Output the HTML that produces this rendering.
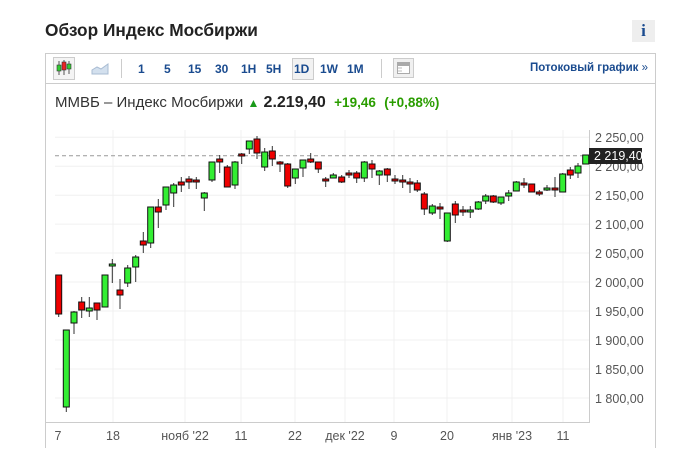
<!DOCTYPE html>
<html><head><meta charset="utf-8">
<style>
html,body{margin:0;width:675px;height:449px;overflow:hidden}
body{background:#fff;font-family:"Liberation Sans",Arial,sans-serif;position:relative}
.a{position:absolute}
.t{left:45px;top:20px;font-size:17.3px;font-weight:bold;color:#222}
.i{left:632px;top:20px;width:23px;height:22px;background:#eee;color:#1a4b8f;font-weight:bold;font-family:"Liberation Serif",serif;font-size:17px;text-align:center;line-height:22px}
.box{left:45px;top:53px;width:609px;height:394px;border:1px solid #ccc;border-bottom:none}
.tb{left:46px;top:54px;width:609px;height:29px;border-bottom:1px solid #ccc}
.n{top:62px;font-size:12px;font-weight:bold;color:#1a4b8f}
.lnk{left:530px;top:62px;font-size:11.5px;font-weight:bold;color:#1a4b8f}
.info{left:55px;top:94px;font-size:15px;color:#333;white-space:nowrap}
</style></head><body>
<div class="a t">Обзор Индекс Мосбиржи</div>
<div class="a i">i</div>
<div class="a box"></div>
<div class="a tb"></div>
<div class="a" style="left:53px;top:57px;width:20px;height:21px;border:1px solid #ccc;background:#f4f4f4"></div>
<svg class="a" style="left:53px;top:57px" width="22" height="22"><line x1="6" y1="4" x2="6" y2="18" stroke="#555"/><rect x="4" y="8" width="4" height="6" fill="#3c3" stroke="#333" stroke-width=".6"/><line x1="11" y1="3" x2="11" y2="18" stroke="#555"/><rect x="9" y="5" width="4" height="8" fill="#e22" stroke="#333" stroke-width=".6"/><line x1="16" y1="4" x2="16" y2="17" stroke="#555"/><rect x="14" y="7" width="4" height="5" fill="#3c3" stroke="#333" stroke-width=".6"/></svg>
<svg class="a" style="left:90px;top:60px" width="20" height="16"><path d="M2 14 L2 10 L7 7 L11 9 L18 4 L18 14Z" fill="#d3e0ee" stroke="#a9bcd3"/></svg>
<div class="a" style="left:121px;top:59px;width:1px;height:19px;background:#ccc"></div>
<div class="a n" style="left:138px">1</div>
<div class="a n" style="left:164px">5</div>
<div class="a n" style="left:188px">15</div>
<div class="a n" style="left:215px">30</div>
<div class="a n" style="left:241px">1H</div>
<div class="a n" style="left:266px">5H</div>
<div class="a" style="left:292px;top:58px;width:20px;height:20px;border:1px solid #ccc;background:#f2f2f2"></div>
<div class="a n" style="left:294px">1D</div>
<div class="a n" style="left:320px">1W</div>
<div class="a n" style="left:347px">1M</div>
<div class="a" style="left:381px;top:59px;width:1px;height:19px;background:#ccc"></div>
<svg class="a" style="left:393px;top:58px" width="22" height="21"><rect x=".5" y=".5" width="20" height="19" fill="#f0f0f0" stroke="#ccc"/><rect x="4.5" y="4.5" width="12" height="11" fill="#fff" stroke="#aaa"/><rect x="5" y="5" width="11" height="3" fill="#aaa"/><line x1="5" y1="10" x2="9" y2="10" stroke="#bbb"/><line x1="5" y1="13" x2="9" y2="13" stroke="#bbb"/></svg>
<div class="a lnk">Потоковый график <span style="font-weight:normal">»</span></div>
<div class="a info">ММВБ – Индекс Мосбиржи <span style="color:#1a9a1a;font-size:12px">&#9650;</span> <b style="font-size:16px;color:#222">2.219,40</b>&nbsp; <b style="color:#2a9d00;font-size:13.5px">+19,46</b>&nbsp; <b style="color:#2a9d00;font-size:13.5px">(+0,88%)</b></div>
<svg class="a" style="left:0;top:0" width="675" height="449" font-family="Liberation Sans,Arial,sans-serif">
<g stroke="#f0f0f0">
<line x1="55" y1="137.3" x2="589" y2="137.3"/><line x1="55" y1="166.2" x2="589" y2="166.2"/><line x1="55" y1="195.2" x2="589" y2="195.2"/><line x1="55" y1="224.1" x2="589" y2="224.1"/><line x1="55" y1="253" x2="589" y2="253"/><line x1="55" y1="282" x2="589" y2="282"/><line x1="55" y1="311" x2="589" y2="311"/><line x1="55" y1="340" x2="589" y2="340"/><line x1="55" y1="369" x2="589" y2="369"/><line x1="55" y1="398" x2="589" y2="398"/>
<line x1="113" y1="130" x2="113" y2="422"/><line x1="185" y1="130" x2="185" y2="422"/><line x1="241" y1="130" x2="241" y2="422"/><line x1="295" y1="130" x2="295" y2="422"/><line x1="345" y1="130" x2="345" y2="422"/><line x1="394" y1="130" x2="394" y2="422"/><line x1="447" y1="130" x2="447" y2="422"/><line x1="512" y1="130" x2="512" y2="422"/><line x1="563" y1="130" x2="563" y2="422"/>
</g>
<line x1="46" y1="422.5" x2="589" y2="422.5" stroke="#ccc"/>
<line x1="589.5" y1="130" x2="589.5" y2="423" stroke="#ccc"/>
<line x1="55" y1="155.7" x2="589" y2="155.7" stroke="#999" stroke-dasharray="4,3"/>
<g font-size="12.5" fill="#555">
<text x="595" y="142">2 250,00</text><text x="595" y="171">2 200,00</text><text x="595" y="200">2 150,00</text><text x="595" y="229">2 100,00</text><text x="595" y="258">2 050,00</text><text x="595" y="287">2 000,00</text><text x="595" y="316">1 950,00</text><text x="595" y="345">1 900,00</text><text x="595" y="374">1 850,00</text><text x="595" y="403">1 800,00</text>
</g>
<rect x="589" y="148" width="53" height="16" fill="#222"/>
<text x="594" y="160" font-size="12.5" fill="#fff">2 219,40</text>
<g font-size="12.5" fill="#555" text-anchor="middle">
<text x="58" y="440">7</text><text x="113" y="440">18</text><text x="185" y="440">нояб '22</text><text x="241" y="440">11</text><text x="295" y="440">22</text><text x="345" y="440">дек '22</text><text x="394" y="440">9</text><text x="447" y="440">20</text><text x="512" y="440">янв '23</text><text x="563" y="440">11</text>
</g>
<g stroke="#333" stroke-width="1">
<line x1="58.7" y1="275" x2="58.7" y2="317"/><line x1="66.3" y1="330" x2="66.3" y2="412"/><line x1="74" y1="311" x2="74" y2="334"/><line x1="81.7" y1="297" x2="81.7" y2="318"/><line x1="89.3" y1="297" x2="89.3" y2="317"/><line x1="97" y1="303" x2="97" y2="320"/><line x1="105" y1="275" x2="105" y2="307"/><line x1="112.3" y1="259" x2="112.3" y2="283"/><line x1="120" y1="279" x2="120" y2="309"/><line x1="127.7" y1="265" x2="127.7" y2="287"/><line x1="135.7" y1="255" x2="135.7" y2="282"/><line x1="143.3" y1="232" x2="143.3" y2="253"/><line x1="150.7" y1="207" x2="150.7" y2="248"/><line x1="158.3" y1="199" x2="158.3" y2="228"/><line x1="166" y1="187" x2="166" y2="210"/><line x1="173.7" y1="183" x2="173.7" y2="207"/><line x1="181.3" y1="177" x2="181.3" y2="192"/><line x1="189" y1="176" x2="189" y2="189"/><line x1="196.3" y1="177" x2="196.3" y2="189"/><line x1="204.3" y1="192" x2="204.3" y2="211"/><line x1="212" y1="162" x2="212" y2="182"/><line x1="219.7" y1="155" x2="219.7" y2="173"/><line x1="227.3" y1="165" x2="227.3" y2="187"/><line x1="235" y1="161" x2="235" y2="189"/><line x1="241.7" y1="153" x2="241.7" y2="164"/><line x1="249.3" y1="141" x2="249.3" y2="154"/><line x1="257" y1="136" x2="257" y2="159"/><line x1="264.7" y1="148" x2="264.7" y2="171"/><line x1="272.3" y1="146" x2="272.3" y2="166"/><line x1="280" y1="161" x2="280" y2="172"/><line x1="287.7" y1="163" x2="287.7" y2="188"/><line x1="295.3" y1="169" x2="295.3" y2="184"/><line x1="303" y1="160" x2="303" y2="177"/><line x1="310.7" y1="153" x2="310.7" y2="163"/><line x1="318.3" y1="162" x2="318.3" y2="173"/><line x1="325.7" y1="177" x2="325.7" y2="187"/><line x1="333.3" y1="173" x2="333.3" y2="178"/><line x1="341.7" y1="175" x2="341.7" y2="183"/><line x1="349" y1="170" x2="349" y2="178"/><line x1="356.7" y1="171" x2="356.7" y2="183"/><line x1="364.3" y1="161" x2="364.3" y2="182"/><line x1="372" y1="160" x2="372" y2="178"/><line x1="379.3" y1="170" x2="379.3" y2="185"/><line x1="387.3" y1="168" x2="387.3" y2="182"/><line x1="395" y1="175" x2="395" y2="184"/><line x1="402.7" y1="175" x2="402.7" y2="188"/><line x1="410" y1="178" x2="410" y2="193"/><line x1="417.3" y1="180" x2="417.3" y2="192"/><line x1="424.3" y1="192" x2="424.3" y2="215"/><line x1="432.3" y1="204" x2="432.3" y2="215"/><line x1="440" y1="203" x2="440" y2="219"/><line x1="447.3" y1="213" x2="447.3" y2="242"/><line x1="455.3" y1="201" x2="455.3" y2="223"/><line x1="463" y1="206" x2="463" y2="216"/><line x1="470.3" y1="206" x2="470.3" y2="218"/><line x1="478.3" y1="201" x2="478.3" y2="210"/><line x1="485.7" y1="194" x2="485.7" y2="204"/><line x1="493.3" y1="195" x2="493.3" y2="203"/><line x1="501" y1="197" x2="501" y2="205"/><line x1="508.7" y1="190" x2="508.7" y2="201"/><line x1="516.3" y1="181" x2="516.3" y2="191"/><line x1="524" y1="178" x2="524" y2="188"/><line x1="531.7" y1="184" x2="531.7" y2="192"/><line x1="539.3" y1="190" x2="539.3" y2="196"/><line x1="547" y1="185" x2="547" y2="191"/><line x1="555" y1="177" x2="555" y2="197"/><line x1="562.7" y1="173" x2="562.7" y2="192"/><line x1="570.3" y1="167" x2="570.3" y2="179"/><line x1="578" y1="163" x2="578" y2="178"/><line x1="585.7" y1="155" x2="585.7" y2="164"/>
</g>
<g stroke="#111" stroke-width="1">
<g fill="#e00">
<rect x="55.7" y="275" width="6" height="39"/><rect x="78.7" y="302" width="6" height="8"/><rect x="94" y="303" width="6" height="7"/><rect x="117" y="290" width="6" height="5"/><rect x="140.3" y="241" width="6" height="4"/><rect x="155.3" y="207" width="6" height="5"/><rect x="178.3" y="182" width="6" height="3"/><rect x="186" y="179" width="6" height="3"/><rect x="193.3" y="180" width="6" height="2"/><rect x="216.7" y="159" width="6" height="3"/><rect x="224.3" y="167" width="6" height="20"/><rect x="238.7" y="154" width="6" height="2"/><rect x="254" y="139" width="6" height="14"/><rect x="269.3" y="151" width="6" height="8"/><rect x="277" y="162" width="6" height="2"/><rect x="284.7" y="164" width="6" height="22"/><rect x="307.7" y="159" width="6" height="3"/><rect x="315.3" y="162" width="6" height="7"/><rect x="322.7" y="179" width="6" height="2"/><rect x="338.7" y="177" width="6" height="5"/><rect x="346" y="173" width="6" height="2"/><rect x="353.7" y="173" width="6" height="5"/><rect x="369" y="164" width="6" height="5"/><rect x="384.3" y="169" width="6" height="6"/><rect x="392" y="179" width="6" height="2"/><rect x="399.7" y="180" width="6" height="2"/><rect x="407" y="182" width="6" height="2"/><rect x="414.3" y="183" width="6" height="7"/><rect x="421.3" y="194" width="6" height="15"/><rect x="437" y="207" width="6" height="2"/><rect x="452.3" y="204" width="6" height="11"/><rect x="460" y="210" width="6" height="2"/><rect x="490.3" y="196" width="6" height="6"/><rect x="521" y="183" width="6" height="2"/><rect x="528.7" y="184" width="6" height="8"/><rect x="536.3" y="192" width="6" height="2"/><rect x="552" y="188" width="6" height="2"/><rect x="567.3" y="170" width="6" height="5"/>
</g>
<g fill="#3e3">
<rect x="63.3" y="330" width="6" height="77"/><rect x="71" y="312" width="6" height="11"/><rect x="86.3" y="308" width="6" height="3"/><rect x="102" y="275" width="6" height="32"/><rect x="109.3" y="264" width="6" height="2"/><rect x="124.7" y="268" width="6" height="15"/><rect x="132.7" y="257" width="6" height="10"/><rect x="147.7" y="207" width="6" height="36"/><rect x="163" y="187" width="6" height="18"/><rect x="170.7" y="185" width="6" height="8"/><rect x="201.3" y="193" width="6" height="5"/><rect x="209" y="162" width="6" height="18"/><rect x="232" y="162" width="6" height="23"/><rect x="246.3" y="141" width="6" height="8"/><rect x="261.7" y="152" width="6" height="15"/><rect x="292.3" y="169" width="6" height="9"/><rect x="300" y="160" width="6" height="8"/><rect x="330.3" y="175" width="6" height="3"/><rect x="361.3" y="162" width="6" height="16"/><rect x="376.3" y="171" width="6" height="4"/><rect x="429.3" y="206" width="6" height="7"/><rect x="444.3" y="213" width="6" height="28"/><rect x="467.3" y="210" width="6" height="2"/><rect x="475.3" y="202" width="6" height="7"/><rect x="482.7" y="196" width="6" height="5"/><rect x="498" y="197" width="6" height="6"/><rect x="505.7" y="193" width="6" height="3"/><rect x="513.3" y="182" width="6" height="9"/><rect x="544" y="188" width="6" height="2"/><rect x="559.7" y="174" width="6" height="18"/><rect x="575" y="166" width="6" height="7"/><rect x="582.7" y="155" width="6" height="9"/>
</g>
</g>
</svg>
</body></html>
